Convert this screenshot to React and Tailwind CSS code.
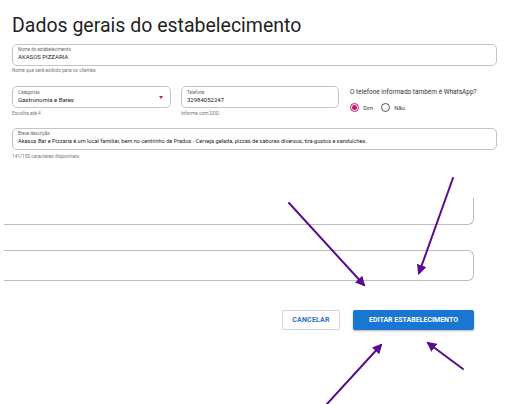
export default function App() {
  const font = { fontFamily: 'Roboto, "Liberation Sans", sans-serif' }

  return (
    <div className="relative w-[512px] h-[404px] overflow-hidden bg-white text-[#212121]" style={font}>
      <div className="pl-[12px] pt-[12px]">
        <h1 className="text-[19.5px] leading-[27px] font-normal text-[#1f1f1f]">Dados gerais do estabelecimento</h1>

        {/* Nome */}
        <div className="mt-[5px] w-[485px] h-[22px] border border-[#c4c4c4] rounded-[5px] px-[5px] pt-[2px]">
          <div className="text-[4.5px] leading-[6px] text-[#666]">Nome do estabelecimento</div>
          <div className="text-[6px] leading-[8px] text-[#222]">AKASOS PIZZARIA</div>
        </div>
        <div className="mt-[2px] text-[4.8px] leading-[6px] text-[#777]">Nome que será exibido para os clientes</div>

        {/* linha 2 */}
        <div className="mt-[12px] flex">
          <div className="w-[159px]">
            <div className="relative h-[22px] border border-[#c4c4c4] rounded-[5px] px-[5px] pt-[3px]">
              <div className="text-[4.5px] leading-[6px] text-[#666]">Categorias</div>
              <div className="text-[6px] leading-[8px] text-[#222]">Gastronomia e Bares</div>
              <div className="absolute right-[7px] top-[9px] w-0 h-0 border-l-[2.5px] border-r-[2.5px] border-t-[3px] border-l-transparent border-r-transparent border-t-[#c2186b]" />
            </div>
            <div className="mt-[3px] text-[4.8px] leading-[6px] text-[#777]">Escolha até 4</div>
          </div>
          <div className="ml-[10px] w-[158px]">
            <div className="h-[22px] border border-[#c4c4c4] rounded-[5px] px-[5px] pt-[3px]">
              <div className="text-[4.5px] leading-[6px] text-[#666]">Telefone</div>
              <div className="text-[6px] leading-[8px] text-[#222]">32984052247</div>
            </div>
            <div className="mt-[3px] text-[4.8px] leading-[6px] text-[#777]">Informe com DDD.</div>
          </div>
          <div className="ml-[11px] pt-[2px]">
            <div className="text-[6.5px] leading-[9px] text-[#333]">O telefone informado também é WhatsApp?</div>
            <div className="mt-[6px] flex items-center text-[6px] text-[#444]">
              <span className="w-[9px] h-[9px] rounded-full border border-[#c2186b] flex items-center justify-center">
                <span className="w-[5px] h-[5px] rounded-full bg-[#c2186b]" />
              </span>
              <span className="ml-[4px]">Sim</span>
              <span className="ml-[8px] w-[9px] h-[9px] rounded-full border border-[#555]" />
              <span className="ml-[4px]">Não</span>
            </div>
          </div>
        </div>

        {/* descrição */}
        <div className="mt-[11px] w-[485px] h-[22px] border border-[#c4c4c4] rounded-[5px] px-[5px] pt-[2px]">
          <div className="text-[4.5px] leading-[6px] text-[#666]">Breve descrição</div>
          <div className="text-[5.6px] leading-[8px] text-[#222] whitespace-nowrap">Akasos Bar e Pizzaria é um local familiar, bem no centrinho de Prados - Cerveja gelada, pizzas de sabores diversos, tira-gostos e sanduíches.</div>
        </div>
        <div className="mt-[4px] text-[4.8px] leading-[6px] text-[#777]">141/150 caracteres disponíveis.</div>
      </div>

      {/* campos cortados */}
      <div className="mt-[38px] ml-[4px] w-[470px] h-[27px] border-r border-b border-[#bdbdbd] rounded-br-[6px]" />
      <div className="mt-[25px] ml-[4px] w-[470px] h-[31px] border-t border-r border-b border-[#bdbdbd] rounded-r-[6px]" />

      {/* botões */}
      <div className="mt-[29px] w-[474px] flex justify-end gap-[13px]">
        <button className="h-[20px] w-[58px] border border-[#c9d6e6] rounded-[2px] text-[7px] font-bold tracking-[0.2px] text-[#2f72c4]">CANCELAR</button>
        <button className="h-[20px] w-[121px] rounded-[2px] bg-[#1976d2] text-[7px] font-bold tracking-[0px] text-white shadow-[0_1px_2px_rgba(0,0,0,0.3)]">EDITAR ESTABELECIMENTO</button>
      </div>

      {/* setas */}
      <svg className="absolute inset-0 pointer-events-none" width="512" height="404" viewBox="0 0 512 404">
        <defs>
          <marker id="ah" viewBox="0 0 10 10" refX="8" refY="5" markerWidth="5" markerHeight="5" orient="auto-start-reverse" markerUnits="strokeWidth">
            <path d="M0 0 L10 5 L0 10 Z" fill="#5b0c8c" />
          </marker>
        </defs>
        <g stroke="#5b0c8c" strokeWidth="2" strokeLinecap="round" fill="none">
          <line x1="289" y1="203" x2="364" y2="285" markerEnd="url(#ah)" />
          <line x1="453" y1="178" x2="419" y2="273" markerEnd="url(#ah)" />
          <line x1="327" y1="404" x2="381" y2="345" markerEnd="url(#ah)" />
          <line x1="463" y1="369" x2="428" y2="343" markerEnd="url(#ah)" />
        </g>
      </svg>
    </div>
  )
}
